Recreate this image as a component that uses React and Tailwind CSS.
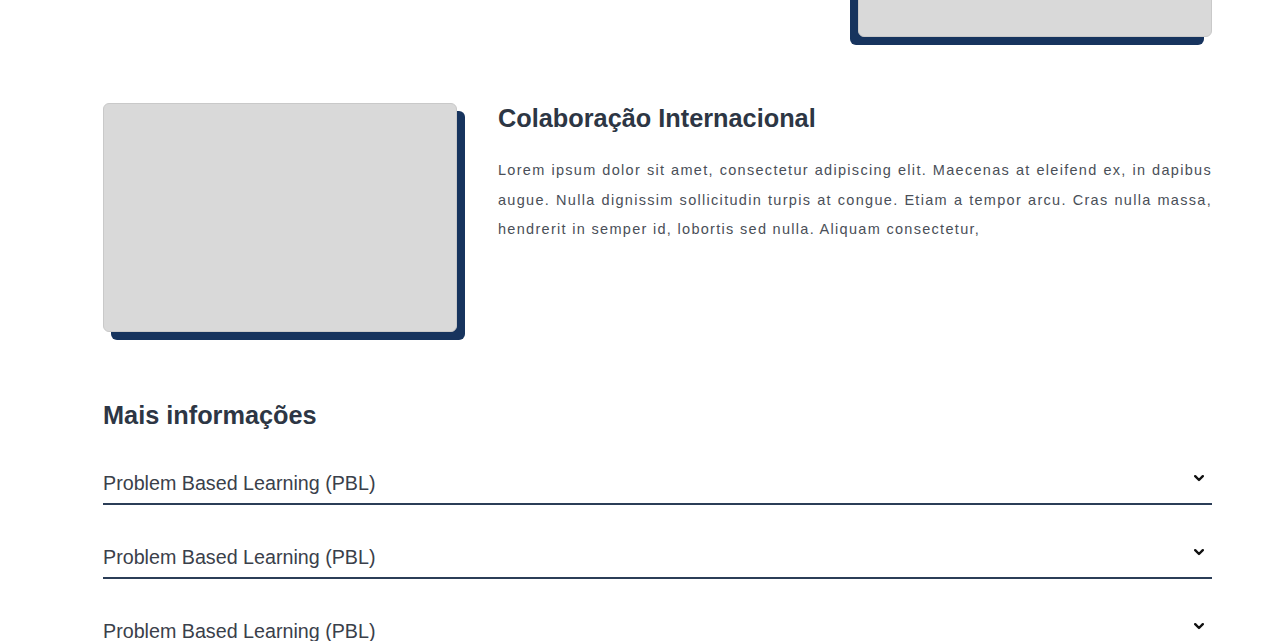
import React, { useState } from 'react';

const lorem =
  'Lorem ipsum dolor sit amet, consectetur adipiscing elit. Maecenas at eleifend ex, in dapibus augue. Nulla dignissim sollicitudin turpis at congue. Etiam a tempor arcu. Cras nulla massa, hendrerit in semper id, lobortis sed nulla. Aliquam consectetur,';

const Imagem = ({ invertido }) => (
  <div
    className={`w-[354px] h-[229px] shrink-0 rounded-[6px] bg-[#d9d9d9] border border-[#c9c9c9] ${
      invertido ? 'shadow-[-8px_8px_0_#17345e]' : 'shadow-[8px_8px_0_#17345e]'
    }`}
  ></div>
);

const Destaque = ({ titulo, texto }) => (
  <div className="flex items-start gap-[41px]">
    <Imagem />
    <div className="flex-1">
      <h2 className="text-[25.3px] leading-[31px] font-bold text-[#2d3644]">{titulo}</h2>
      <p className="mt-[22px] text-[14.5px] leading-[29.5px] tracking-[1.3px] text-[#4a4f58] text-justify">
        {texto}
      </p>
    </div>
  </div>
);

const Chevron = () => (
  <svg width="10" height="7" viewBox="0 0 10 7" fill="none" className="mt-[6px] mr-[8px]">
    <polyline points="1.2,1.2 5,5 8.8,1.2" stroke="#111" strokeWidth="2.4" strokeLinecap="round" strokeLinejoin="round" />
  </svg>
);

const ItemAcordeao = ({ titulo }) => {
  const [aberto, setAberto] = useState(false);
  return (
    <div className="border-b-2 border-[#2b3d57]">
      <button
        onClick={() => setAberto(!aberto)}
        className="w-full flex items-start justify-between pb-[6px] text-left"
      >
        <span className="text-[19.7px] leading-[28px] text-[#3a404a]">{titulo}</span>
        <Chevron />
      </button>
      {aberto && <div className="pb-4 text-[15px] text-[#4a4f58]">{lorem}</div>}
    </div>
  );
};

export default function App() {
  return (
    <div className="min-h-screen bg-white overflow-hidden" style={{ fontFamily: '"Liberation Sans", Arial, sans-serif' }}>
      <div className="pl-[103px] pr-[68px] -mt-[192px] pb-16">
        {/* bloco anterior, rolado para cima */}
        <div className="flex justify-end">
          <Imagem invertido />
        </div>

        <div className="mt-[66px]">
          <Destaque titulo="Colaboração Internacional" texto={lorem} />
        </div>

        <section className="mt-[68px]">
          <h2 className="text-[25.3px] leading-[30px] font-bold text-[#2d3644]">Mais informações</h2>
          <div className="mt-[39px] flex flex-col gap-[38px]">
            <ItemAcordeao titulo="Problem Based Learning (PBL)" />
            <ItemAcordeao titulo="Problem Based Learning (PBL)" />
            <ItemAcordeao titulo="Problem Based Learning (PBL)" />
          </div>
        </section>
      </div>
    </div>
  );
}
